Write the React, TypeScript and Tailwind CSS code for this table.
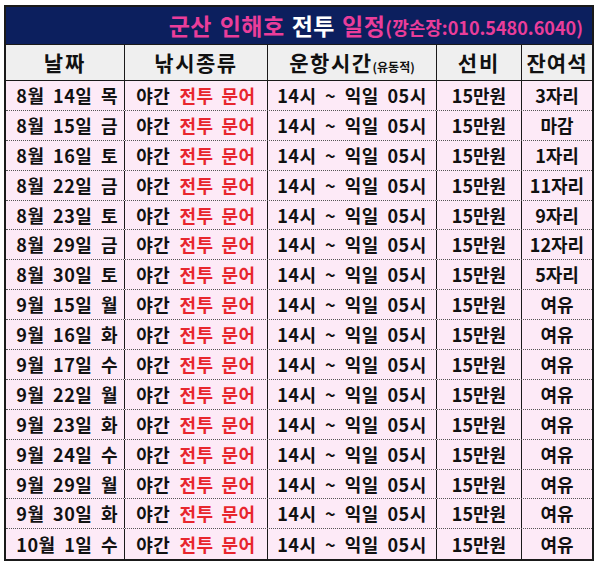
import React from "react";

const rows: [string, string][] = [
  ["8월 14일 목", "3자리"],
  ["8월 15일 금", "마감"],
  ["8월 16일 토", "1자리"],
  ["8월 22일 금", "11자리"],
  ["8월 23일 토", "9자리"],
  ["8월 29일 금", "12자리"],
  ["8월 30일 토", "5자리"],
  ["9월 15일 월", "여유"],
  ["9월 16일 화", "여유"],
  ["9월 17일 수", "여유"],
  ["9월 22일 월", "여유"],
  ["9월 23일 화", "여유"],
  ["9월 24일 수", "여유"],
  ["9월 29일 월", "여유"],
  ["9월 30일 화", "여유"],
  ["10월 1일 수", "여유"],
];

const font = { fontFamily: '"Noto Sans CJK KR", "Noto Sans", sans-serif' };

export default function App() {
  return (
    <div className="w-[600px] h-[577px] bg-white pl-[4px] pt-[5px]" style={font}>
      <div className="w-[590px] border-2 border-[#1a1a1a]">
        <div className="h-[38px] bg-[#0c1f5e] flex items-center justify-end pr-[9px] border-b border-[#1a1a1a] font-bold">
          <span className="text-[23px] text-[#ea3d9a] tracking-[0.5px] [word-spacing:2px]">군산 인해호</span>
          <span className="text-[23px] text-white ml-[7px] tracking-[0.5px]">전투</span>
          <span className="text-[23px] text-[#ea3d9a] ml-[7px] tracking-[0.5px]">일정</span>
          <span className="text-[18px] text-[#ea3d9a] mt-[3px]">(깡손장:010.5480.6040)</span>
        </div>
        <div className="grid grid-cols-[119px_143px_169px_85px_70px] h-[36px] bg-[#efefef] border-b border-[#1a1a1a] font-bold text-[#111] text-[21px]">
          <div className="flex items-center justify-center border-r border-[#1a1a1a] tracking-[2px]">날짜</div>
          <div className="flex items-center justify-center border-r border-[#1a1a1a] tracking-[1.5px]">낚시종류</div>
          <div className="flex items-end justify-center pb-[4px] border-r border-[#1a1a1a]">
            <span className="tracking-[1.5px] leading-none pb-[3px]">운항시간</span>
            <span className="text-[12px] leading-none pb-[3px]">(유동적)</span>
          </div>
          <div className="flex items-center justify-center border-r border-[#1a1a1a] tracking-[2px]">선비</div>
          <div className="flex items-center justify-center tracking-[1px]">잔여석</div>
        </div>
        {rows.map(([d, s], i) => (
          <div
            key={i}
            className={`grid grid-cols-[119px_143px_169px_85px_70px] h-[29.9px] bg-[#fdeaf7] font-bold text-[#111] text-[18px] ${
              i < rows.length - 1 ? "border-b border-dotted border-[#555]" : ""
            }`}
          >
            <div className="flex items-center justify-end pr-[6px] border-r border-[#1a1a1a] whitespace-pre tracking-[0.5px] [word-spacing:4px]">
              {d}
            </div>
            <div className="flex items-center justify-center border-r border-[#1a1a1a] gap-[9px] tracking-[0.5px]">
              <span>야간</span>
              <span className="text-[#e8262e]">전투</span>
              <span className="text-[#e8262e] -ml-[1px]">문어</span>
            </div>
            <div className="flex items-center justify-center border-r border-[#1a1a1a] whitespace-pre tracking-[0.5px] [word-spacing:4px]">
              14시 ~ 익일 05시
            </div>
            <div className="flex items-center justify-center border-r border-[#1a1a1a]">15만원</div>
            <div className="flex items-center justify-center">{s}</div>
          </div>
        ))}
      </div>
    </div>
  );
}
